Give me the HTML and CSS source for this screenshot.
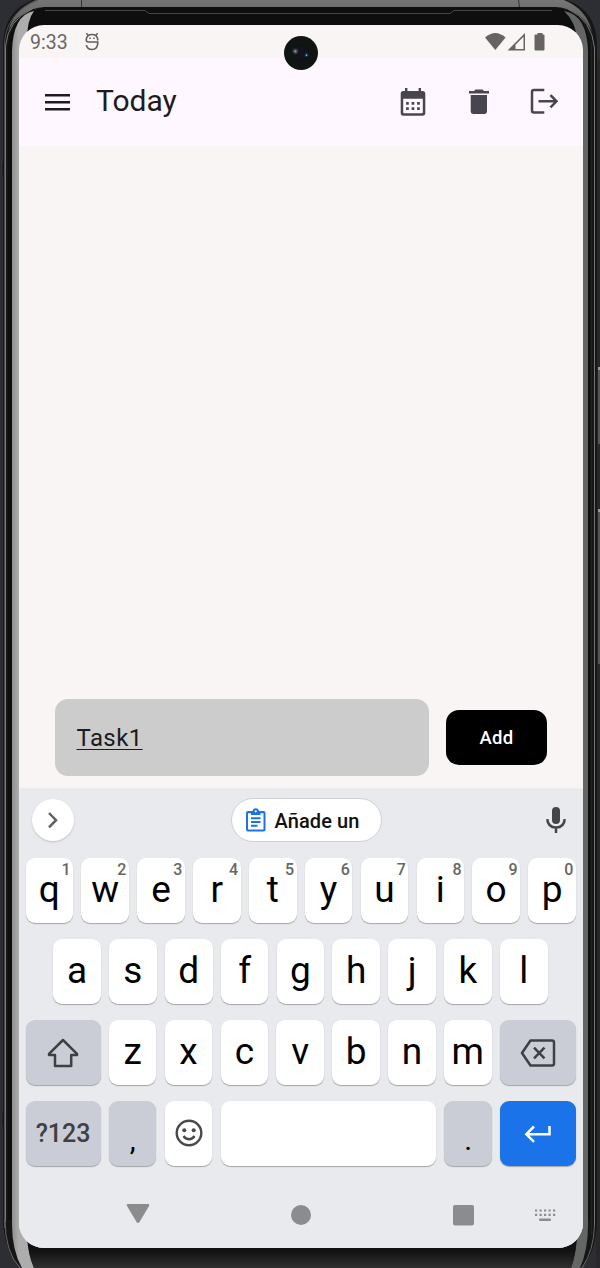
FILE: index.html
```html
<!DOCTYPE html>
<html lang="en">
<head>
<meta charset="utf-8">
<title>Today</title>
<link rel="stylesheet" href="styles.css">
</head>
<body>
<div class="device">
  <svg class="frame" width="600" height="1268" viewBox="0 0 600 1268" aria-hidden="true">
    <defs>
      <linearGradient id="metal" x1="0" y1="0" x2="0" y2="1"><stop offset="0" stop-color="#777"/><stop offset="1" stop-color="#5c5c5c"/></linearGradient>
      <linearGradient id="chin" x1="0" y1="0" x2="0" y2="1"><stop offset="0" stop-color="#0c0c0c"/><stop offset=".55" stop-color="#121212"/><stop offset="1" stop-color="#303030"/></linearGradient>
      <linearGradient id="side" x1="0" y1="0" x2="1" y2="0"><stop offset="0" stop-color="#8f8f8f"/><stop offset=".3" stop-color="#adadad"/><stop offset="1" stop-color="#adadad"/></linearGradient>
    </defs>
    <rect width="600" height="1268" fill="#2d2e33"/>
    <rect x="596" y="60" width="4" height="1208" fill="#292828"/>
    <path d="M3 1220V44Q4 10 35-1H563Q596 8 597 44V1220Q596 1255 580 1268H22Q4 1252 3 1220Z" fill="#161616"/>
    <path d="M8 32Q14 6 42-2H558Q586 6 592 32Q580 8 555 7H45Q18 9 8 32Z" fill="url(#metal)"/>
    <path d="M81.500 0V7M518.500 0L519.500 7" stroke="#333"/>
    <path d="M4.500 1228V42Q7 12 38 0" fill="none" stroke="#4c4c4c"/>
    <path d="M5.500 1222V46Q8 20 32 9" fill="none" stroke="#858585" stroke-width=".9"/>
    <path d="M8 1220V48Q10 15 45 7H555Q588 15 590 48V1220" fill="#0e0e0e"/>
    <path d="M45 10.500H145L149 13.500H450L454 10.500H552" fill="none" stroke="#464646"/>
    <path d="M12 1225V51Q13 15 34 11Q27 20 27 40V1236Q28 1255 34 1268H22Q12 1250 12 1225Z" fill="url(#side)"/>
    <path d="M588 1225V51Q587 15 564 11Q576 22 577 40V1236Q576 1255 571 1268H580Q588 1250 588 1225Z" fill="#646666"/>
    <path d="M594.500 1225V48Q592 20 568 9" fill="none" stroke="#757575"/>
    <path d="M591.500 1235V42" stroke="#222"/>
    <path d="M5 1220Q5 1252 20 1268M594.500 1225Q594 1250 582 1268" fill="none" stroke="#666"/>
    <path d="M27 1230H577Q577 1250 571 1268H34Q27 1250 27 1230Z" fill="url(#chin)"/>
    <path d="M598 367h2v77h-2zM598 509h2v155h-2z" fill="#555"/>
    <path d="M598 367h2v3h-2zM598 509h2v3h-2z" fill="#999"/>
    <path d="M3 163v12M3 1112v14M596.500 162v12M596.500 1111v12" stroke="#171717"/>
  </svg>

  <div class="screen">
    <header class="status">
      <span class="clock">9:33</span>
      <svg class="debug" width="16" height="20" viewBox="0 0 16 20" fill="none" stroke="#5f5e5d" stroke-width="1.600"><path d="M2.300 1.300L4 3M13.700 1.300L12 3M13.700 8.500V7Q13 2.500 8 2.500T2.300 7V8Q2.300 10 4.300 10H13.700V12Q13 17.500 8 17.500Q3.200 17.500 2.300 13.200"/><path d="M5.300 6.300h1.500M9.200 6.300h1.500"/></svg>
      <span class="grow"></span>
      <svg class="signal" width="64" height="20" viewBox="0 0 64 20" fill="#666463"><path d="M0 5.500Q10.300-3.500 20.600 5.500L10.300 18Z"/><path fill-rule="evenodd" d="M22.500 18.500L40 1V18.500ZM30.500 17H38.500V4.800L30.500 12.800Z"/><path d="M52.500 1h5v1.500h1q1 0 1 1v14q0 1-1 1h-8q-1 0-1-1v-14q0-1 1-1h2z"/></svg>
    </header>

    <nav class="appbar">
      <svg class="menu" width="26" height="18" viewBox="0 0 26 18"><path d="M0 2.200H25M0 9.200H25M0 16.200H25" stroke="#1d1b20" stroke-width="2.600"/></svg>
      <h1 class="title">Today</h1>
      <svg class="calendar" width="26" height="28" viewBox="0 0 26 28" fill="#49454f"><path fill-rule="evenodd" d="M5 0h2.400v3h11.200V0H21v3h1.600Q25.300 3 25.300 5.700V25Q25.300 27.700 22.600 27.700H3.400Q.7 27.700.7 25V5.700Q.7 3 3.400 3H5ZM3.200 10.700V24.200Q3.200 25.200 4.200 25.200H21.800Q22.800 25.200 22.800 24.200V10.700Z"/><path d="M6.100 14h2.700v2.700H6.100zM11.600 14h2.700v2.700h-2.700zM17.100 14h2.700v2.700h-2.700zM6.100 19.300h2.700V22H6.100zM11.600 19.300h2.700V22h-2.700zM17.100 19.300h2.700V22h-2.700z"/></svg>
      <svg class="trash" width="20" height="26" viewBox="0 0 20 26" fill="#49454f"><path d="M0 2H5L6.500.6H13.500L15 2H20V4.500H0ZM1.700 6H18V22.600Q18 25 15.600 25H4.100Q1.700 25 1.700 22.600Z"/></svg>
      <svg class="logout" width="28" height="26" viewBox="0 0 28 26" fill="none" stroke="#49454f" stroke-width="2.500"><path d="M14.300 2H4Q2 2 2 4V22.500Q2 24.500 4 24.500H14.300M8.500 13.300H26.500M20.500 7.200L26.500 13.300L20.500 19.400"/></svg>
    </nav>

    <main class="content">
      <div class="entry"><span class="task">Task1</span></div>
      <button class="add">Add</button>
    </main>

    <section class="keyboard">
      <div class="suggest">
        <span class="expand"><svg width="12" height="18" viewBox="0 0 12 18"><path d="M2 2L9 9.200L2 16.400" fill="none" stroke="#5f6062" stroke-width="2.500"/></svg></span>
        <span class="chip"><svg width="20" height="24" viewBox="0 0 20 24"><path fill="#1b73e8" fill-rule="evenodd" d="M2 3H6.500Q7 .3 9.700.3T13 3H17.500Q19.500 3 19.500 5V21.500Q19.500 23.500 17.500 23.500H2Q0 23.500 0 21.500V5Q0 3 2 3ZM2 5.200V21.500H17.500V5.200H14.500V7H5V5.200ZM9.700 2.200a1 1 0 1 0 .1 0Z"/><path d="M5 10.200H14.500M5 14H14.500M5 17.800H11.500" stroke="#1b73e8" stroke-width="1.900"/></svg><span class="clip">Añade un</span></span>
        <svg class="mic" width="20" height="28" viewBox="0 0 20 28"><rect x="6" y="1" width="8" height="17" rx="4" fill="#444548"/><path d="M1.300 13.200Q1.800 21.500 10 21.500T18.700 13.200M10 21.500V27" fill="none" stroke="#444548" stroke-width="2.500"/></svg>
      </div>

      <div class="row">
        <div class="key">q<sup>1</sup></div><div class="key">w<sup>2</sup></div><div class="key">e<sup>3</sup></div><div class="key">r<sup>4</sup></div><div class="key">t<sup>5</sup></div><div class="key">y<sup>6</sup></div><div class="key">u<sup>7</sup></div><div class="key">i<sup>8</sup></div><div class="key">o<sup>9</sup></div><div class="key">p<sup>0</sup></div>
      </div>
      <div class="row middle">
        <div class="key">a</div><div class="key">s</div><div class="key">d</div><div class="key">f</div><div class="key">g</div><div class="key">h</div><div class="key">j</div><div class="key">k</div><div class="key">l</div>
      </div>
      <div class="row">
        <div class="key wide gray icon"><svg width="32" height="30" viewBox="0 0 32 30"><path d="M16 2L30 15.800V17H24.200V28H8V17H2V15.800Z" fill="none" stroke="#3f4043" stroke-width="2.500" stroke-linejoin="round"/></svg></div>
        <div class="key">z</div><div class="key">x</div><div class="key">c</div><div class="key">v</div><div class="key">b</div><div class="key">n</div><div class="key">m</div>
        <div class="key last gray icon"><svg width="36" height="28" viewBox="0 0 36 28" fill="none" stroke="#3f4043" stroke-width="2.500" stroke-linejoin="round"><path d="M10.500 1.500H32Q34 1.500 34 3.500V24.500Q34 26.500 32 26.500H10.500L2 14ZM14 8.700L24.500 19.300M24.500 8.700L14 19.300"/></svg></div>
      </div>
      <div class="row">
        <div class="key wide gray mode">?123</div>
        <div class="key gray mark">,</div>
        <div class="key icon face"><svg width="28" height="28" viewBox="0 0 28 28"><g fill="none" stroke="#48494b" stroke-width="2.400"><circle cx="14" cy="14" r="12.300"/><path d="M8.500 17Q10.500 20.200 14 20.200T19.500 17"/></g><circle cx="9.300" cy="11.300" r="2" fill="#48494b"/><circle cx="18.700" cy="11.300" r="2" fill="#48494b"/></svg></div>
        <div class="key space"></div>
        <div class="key gray mark">.</div>
        <div class="key last enter icon"><svg width="28" height="18" viewBox="0 0 28 18"><path d="M25.500 1V9.200H2.500M10 1.500L2.300 9.200L10 16.900" fill="none" stroke="#fff" stroke-width="2.500"/></svg></div>
      </div>

      <div class="sysnav">
        <svg width="564" height="40" viewBox="0 0 564 40" fill="#8b8c8e"><path d="M109 10H129Q131 10 130 12L120.500 28Q119 30 117.500 28L108 12Q107 10 109 10Z"/><circle cx="282" cy="21" r="10"/><rect x="434" y="11" width="21" height="20.500" rx="2"/><path d="M516 16.500H537M516 20.800H537" stroke="#8b8c8e" stroke-width="2.200" stroke-dasharray="2.200 2.300"/><rect x="520" y="24.500" width="12" height="2.500" rx="1"/></svg>
      </div>
    </section>
  </div>
  <svg class="camera" width="34" height="34" viewBox="0 0 34 34"><defs><radialGradient id="lens"><stop offset="0" stop-color="#17121f"/><stop offset=".8" stop-color="#10131d"/><stop offset="1" stop-color="#0d1012"/></radialGradient><radialGradient id="glint"><stop offset="0" stop-color="#aaa8b4"/><stop offset="1" stop-color="#28233a" stop-opacity="0"/></radialGradient></defs><circle cx="17" cy="17" r="17" fill="#101412"/><circle cx="17" cy="17.500" r="8.500" fill="url(#lens)"/><circle cx="11.300" cy="15.300" r="4" fill="url(#glint)"/><circle cx="22.500" cy="19" r="2" fill="#173653"/><circle cx="22.500" cy="19.300" r=".8" fill="#76c6df"/></svg>
</div>
</body>
</html>
```
FILE: styles.css
```css
* { box-sizing: border-box; }
body { margin: 0; font-family: Roboto, "Liberation Sans", sans-serif; background: #2d2e33; }
svg { display: block; flex: none; }
.device { position: relative; width: 600px; height: 1268px; padding: 25px 17px 20px 19px; overflow: hidden; }
.frame { position: absolute; left: 0; top: 0; }
.camera { position: absolute; left: 284px; top: 36px; }
.screen { position: relative; height: 1223px; border-radius: 25px; overflow: hidden; background: #f9f5f4; display: flex; flex-direction: column; }
.grow { flex: 1; }

.status { height: 33px; display: flex; align-items: center; padding: 1px 34px 0 11px; color: #696766; }
.clock { font-size: 19.500px; }
.debug { margin-left: 16px; }

.appbar { height: 88px; background: #fef7ff; display: flex; align-items: center; padding: 0 25px 0 26px; }
.title { flex: 1; margin: -3px 0 0 25px; font-size: 30px; font-weight: 400; color: #1d1b20; }
.calendar { margin-top: -1px; }
.trash { margin-left: 43px; }
.logout { margin: -2px 0 0 41px; }
.menu { margin-top: -1px; }

.content { flex: 1; display: flex; align-items: flex-end; padding: 0 36px 14px; gap: 17px; }
.entry { flex: 1; height: 77px; border-radius: 13px; background: #ccc; padding-left: 21.500px; display: flex; align-items: center; }
.task { font-size: 24px; color: #1d1b20; letter-spacing: .4px; text-decoration: underline; text-decoration-thickness: 1px; text-underline-offset: 3px; }
.add { width: 101px; height: 55px; margin-bottom: 11px; padding: 0; border: 0; border-radius: 13px; background: #000; color: #fff; font: 500 18.500px Roboto, sans-serif; letter-spacing: .3px; }

.keyboard { height: 458px; background: #e8eaed; box-shadow: 0 -1px 2px #e2e1e1; padding: 0 7px; }
.suggest { height: 68px; display: grid; grid-template-columns: 1fr auto 1fr; align-items: center; padding: 0 10px 9px 6px; }
.expand { width: 42px; height: 42px; border-radius: 50%; background: #fff; box-shadow: 0 1px 2px #bfc0c3; display: grid; place-items: center; }
.chip { width: 151px; height: 44px; margin-left: 14px; border: 1px solid #cfd0d3; border-radius: 22px; background: #fff; display: flex; align-items: center; gap: 9px; padding-left: 14px; font-size: 20px; font-weight: 500; letter-spacing: .1px; color: #111; }
.clip { padding-top: 2px; }
.mic { justify-self: end; margin-right: .5px; }
.row { display: flex; gap: 8.270px; height: 65px; margin: 0 0 16px -.5px; }
.middle { padding-left: 27.700px; }
.key { position: relative; flex: 0 0 47.600px; height: 65px; border-radius: 9px; background: #fff; box-shadow: 0 1px 1px #a3a5a8; display: flex; align-items: center; justify-content: center; padding-bottom: 3px; font-size: 37px; line-height: 61px; color: #000; }
.key sup { position: absolute; right: 2.500px; top: 3px; font-size: 16px; line-height: 18px; font-weight: 500; color: #666; }
.icon { padding-bottom: 0; }
.face { padding-bottom: 2px; }
.wide { flex-basis: 75.100px; }
.last { flex: 1; }
.space { flex: 0 0 215.600px; }
.gray { background: #cacdd6; }
.mode { font-size: 25px; font-weight: 500; color: #3f4043; padding-bottom: 0; }
.mark { font-size: 30px; padding: 11px 0 0; }
.enter { background: #1a73e8; }
.sysnav { margin: 0 -7px; padding-top: 12px; }
```
